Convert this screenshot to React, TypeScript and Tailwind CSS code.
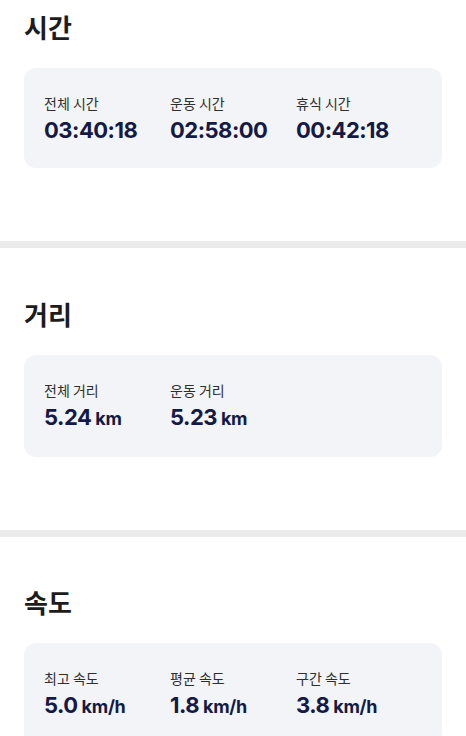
import React from "react";

type Item = { label: string; value: string; unit?: string };

const KR = { fontFamily: '"Noto Sans CJK KR", "Noto Sans", sans-serif' };
const NUM = { fontFamily: 'Inter, "Noto Sans CJK KR", sans-serif' };

function Card({ items }: { items: Item[] }) {
  return (
    <div className="flex rounded-xl bg-[#f2f4f8] pl-5 pt-[25px] pb-6">
      {items.map((it) => (
        <div key={it.label} className="flex w-[126px] flex-col">
          <div className="text-[14px] leading-[20px] text-[#2e2e2e]" style={KR}>
            {it.label}
          </div>
          <div className="mt-[3px] flex items-baseline text-[#151a44]" style={NUM}>
            <span className="text-[22px] font-bold leading-[28px] tracking-[-0.5px]">{it.value}</span>
            {it.unit && (
              <span className="ml-[4px] text-[18px] font-bold leading-[28px] tracking-[-0.3px]">
                {it.unit}
              </span>
            )}
          </div>
        </div>
      ))}
    </div>
  );
}

function Section({
  title,
  items,
  top,
  divider = true,
}: {
  title: string;
  items: Item[];
  top: string;
  divider?: boolean;
}) {
  return (
    <>
      <section className={`px-6 pb-[73px] ${top}`}>
        <h2 className="text-[26px] font-bold leading-[34px] text-[#1c1c1c]" style={KR}>
          {title}
        </h2>
        <div className="mt-6">
          <Card items={items} />
        </div>
      </section>
      {divider && <div className="h-[7px] bg-[#ebebeb]" />}
    </>
  );
}

export default function App() {
  return (
    <div className="min-h-[736px] w-[466px] overflow-hidden bg-white">
      <Section
        title="시간"
        top="pt-[10px]"
        items={[
          { label: "전체 시간", value: "03:40:18" },
          { label: "운동 시간", value: "02:58:00" },
          { label: "휴식 시간", value: "00:42:18" },
        ]}
      />
      <Section
        title="거리"
        top="pt-[49px]"
        items={[
          { label: "전체 거리", value: "5.24", unit: "km" },
          { label: "운동 거리", value: "5.23", unit: "km" },
        ]}
      />
      <Section
        title="속도"
        top="pt-[48px]"
        divider={false}
        items={[
          { label: "최고 속도", value: "5.0", unit: "km/h" },
          { label: "평균 속도", value: "1.8", unit: "km/h" },
          { label: "구간 속도", value: "3.8", unit: "km/h" },
        ]}
      />
    </div>
  );
}
